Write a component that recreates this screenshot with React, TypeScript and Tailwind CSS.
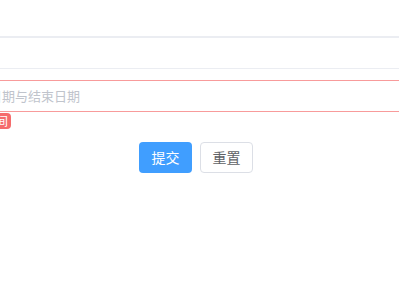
export default function App() {
  return (
    <div
      className="relative h-[300px] w-[399px] overflow-hidden bg-white"
      style={{ fontFamily: '"Noto Sans CJK SC", "Liberation Sans", sans-serif' }}
    >
      <div className="ml-[-200px] w-[800px] pt-[36px]">
        <div className="h-[33px] border-y border-t-2 border-[#ebedf2] bg-white" />
        <div className="mt-[11px] flex h-[32px] items-center border border-[#f89b9b] bg-white pl-[123px] text-[13px] text-[#c0c4cc]">
          请选择开始日期与结束日期
        </div>
        <div className="mt-[1px] flex">
          <span className="ml-[145px] rounded-[4px] bg-[#f56c6c] px-[3px] text-[12px] leading-[16px] text-white">
            请选择时间
          </span>
        </div>
      </div>
      <div className="mt-[13px] flex gap-[8px] pl-[139px]">
        <button className="h-[31px] w-[53px] rounded-[4px] bg-[#409eff] text-[14px] text-white">
          提交
        </button>
        <button className="h-[31px] w-[53px] rounded-[4px] border border-[#dcdfe6] bg-white text-[14px] text-[#606266]">
          重置
        </button>
      </div>
    </div>
  );
}
